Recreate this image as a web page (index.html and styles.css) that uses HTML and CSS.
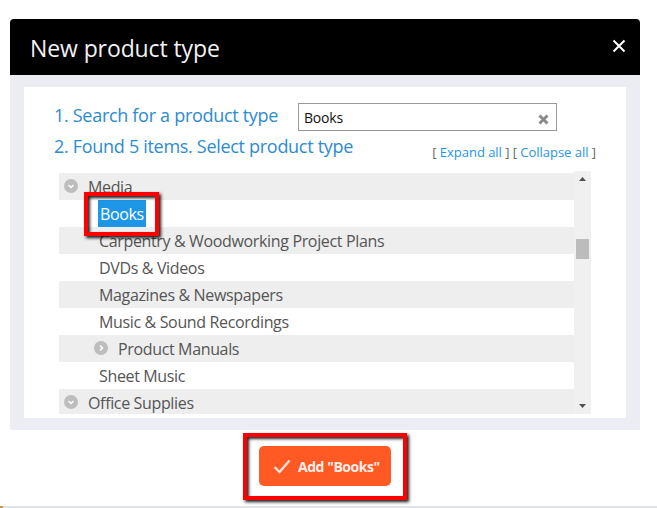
FILE: index.html
```html
<!DOCTYPE html>
<html lang="en">
<head>
<meta charset="utf-8">
<title>New product type</title>
<link rel="stylesheet" href="styles.css">
</head>
<body>
<div class="modal">
  <header class="head">
    <h1 class="title">New product type</h1>
    <svg class="close" width="14" height="14" viewBox="0 0 14 14"><path d="M1.500 1.500L12.500 12.500M12.500 1.500L1.500 12.500" stroke="#fff" stroke-width="2" fill="none"/></svg>
  </header>
  <div class="body">
    <div class="panel">
      <div class="steps">
        <div class="step-one">
          <span class="step">1. Search for a product type</span>
          <div class="search">
            <span class="search-text">Books</span>
            <svg width="11" height="11" viewBox="0 0 11 11"><path d="M1.500 1.500L9.500 9.500M9.500 1.500L1.500 9.500" stroke="#8a8a8a" stroke-width="3" fill="none"/></svg>
          </div>
        </div>
        <div class="step-two">
          <span class="step">2. Found 5 items. Select product type</span>
          <span class="links">[ <a class="link">Expand all</a> ] [ <a class="link">Collapse all</a> ]</span>
        </div>
      </div>
      <div class="tree">
        <div class="rows">
          <div class="row grey lvl0"><span class="tog"><svg width="14" height="14" viewBox="0 0 14 14"><circle cx="7" cy="7" r="7" fill="#bdbdbd"/><path d="M4.500 6L7 8.500L9.500 6" stroke="#fff" stroke-width="1.500" fill="none"/></svg></span>Media</div>
          <div class="row lvl1"><span class="sel">Books</span></div>
          <div class="row grey lvl1">Carpentry &amp; Woodworking Project Plans</div>
          <div class="row lvl1">DVDs &amp; Videos</div>
          <div class="row grey lvl1">Magazines &amp; Newspapers</div>
          <div class="row lvl1">Music &amp; Sound Recordings</div>
          <div class="row grey lvl2"><span class="tog"><svg width="14" height="14" viewBox="0 0 14 14"><circle cx="7" cy="7" r="7" fill="#bdbdbd"/><path d="M6 4.500L8.500 7L6 9.500" stroke="#fff" stroke-width="1.500" fill="none"/></svg></span>Product Manuals</div>
          <div class="row lvl1">Sheet Music</div>
          <div class="row grey lvl0 last"><span class="tog"><svg width="14" height="14" viewBox="0 0 14 14"><circle cx="7" cy="7" r="7" fill="#bdbdbd"/><path d="M4.500 6L7 8.500L9.500 6" stroke="#fff" stroke-width="1.500" fill="none"/></svg></span>Office Supplies</div>
        </div>
        <div class="scroll">
          <svg width="7" height="4" viewBox="0 0 7 4"><path d="M3.500 0L7 4H0Z" fill="#505050"/></svg>
          <div class="thumb"></div>
          <svg class="down" width="7" height="4" viewBox="0 0 7 4"><path d="M0 0H7L3.500 4Z" fill="#505050"/></svg>
        </div>
      </div>
    </div>
  </div>
</div>
<div class="actions">
  <button class="add"><svg width="18" height="15" viewBox="0 0 18 15"><path d="M1.500 8L6.500 13L16.500 1.500" stroke="#fbe3da" stroke-width="2.300" fill="none"/></svg>Add "Books"</button>
</div>
<div class="mark mark-books"></div>
<div class="mark mark-add"></div>
<div class="edge"><span class="edge-tab"></span></div>
</body>
</html>
```
FILE: styles.css
```css
* { box-sizing: border-box; }
html, body { height: 100%; }
body {
  margin: 0;
  padding: 19px 17px 0 10px;
  background: #fff;
  font-family: "Open Sans", "Noto Sans", sans-serif;
  color: #555;
  overflow: hidden;
  position: relative;
}
.modal { width: 630px; }
.head {
  height: 56px;
  background: #000;
  border-radius: 4px 4px 0 0;
  display: flex;
  align-items: center;
  justify-content: space-between;
  padding: 0 14px 0 20px;
}
.title { margin: 2px 0 0; font-size: 23px; font-weight: 400; color: #f2f2f2; letter-spacing: -0.1px; }
.close { margin-top: -3px; }
.body { background: #ecedf3; padding: 12px 14px; height: 355px; }
.panel { background: #fff; height: 331px; padding: 16px 30px 0 30px; }
.step { color: #2c8bd2; font-size: 18px; letter-spacing: -0.3px; line-height: 24px; }
.step-one { display: flex; align-items: center; justify-content: space-between; margin-right: 39px; height: 28px; }
.step-one .step { margin-top: -5px; }
.search {
  width: 259px; height: 28px;
  border: 1px solid #999;
  display: flex; align-items: center; justify-content: space-between;
  padding: 0 7px 0 5px;
}
.search svg { margin-top: 4px; }
.search-text { font-size: 14px; color: #111; letter-spacing: -0.2px; }
.step-two { display: flex; justify-content: space-between; align-items: center; height: 32px; }
.step-two .step { margin-top: -2px; }
.links { font-size: 13px; color: #666; margin-top: 10px; letter-spacing: -0.03px; }
.link { color: #1e96e8; }
.tree { display: flex; width: 532px; height: 241px; margin-top: 10px; margin-left: 5px; position: relative; }
.rows { width: 515px; }
.row { height: 27px; display: flex; align-items: center; font-size: 16px; color: #555; letter-spacing: -0.35px; white-space: nowrap; }
.row.last { height: 25px; padding-top: 2px; }
.row.last .tog { margin-top: -1px; }
.grey { background: #eee; }
.lvl0 { padding-left: 5px; }
.lvl1 { padding-left: 40px; }
.lvl2 { padding-left: 35px; }
.tog { display: flex; margin-right: 10px; margin-top: -1px; }
.sel { background: #1e96e8; color: #fff; padding: 1px 2px 0; margin-left: -1px; line-height: 27px; height: 27px; }
.scroll { width: 17px; background: #f0f0f0; display: flex; flex-direction: column; align-items: center; padding: 6px 0; margin-top: -2px; height: 243px; }
.thumb { width: 13px; height: 20px; background: #bcbcbc; margin-top: 58px; }
.down { margin-top: auto; }
.actions { display: flex; padding: 16px 0 0 249px; }
.add {
  width: 132px; height: 40px;
  padding: 0 0 0 14px;
  background: #ff5a24;
  border: 0; border-radius: 5px;
  color: #fdeee8;
  font: 700 14px "Open Sans", sans-serif;
  letter-spacing: -0.45px;
  display: flex; align-items: center; gap: 7px;
}
.mark { position: absolute; border: 4px solid #f00; box-shadow: 2px 2px 3px rgba(0,0,0,.9), inset 2px 2px 3px rgba(0,0,0,.85); }
.mark-books { left: 84px; top: 192px; width: 75px; height: 44px; }
.mark-add { left: 243px; top: 433px; width: 164px; height: 67px; }
.edge { position: absolute; left: 0; right: 0; bottom: 0; height: 2px; background: #dfe3e6; }
.edge-tab { display: block; width: 3px; height: 2px; background: #d19a3a; }
```
